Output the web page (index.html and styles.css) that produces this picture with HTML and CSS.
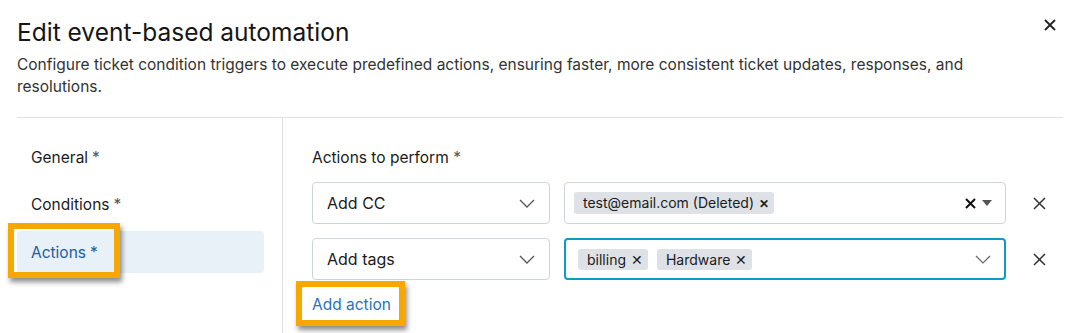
FILE: index.html
```html
<!DOCTYPE html>
<html lang="en">
<head>
    <meta charset="UTF-8">
    <title>Edit event-based automation</title>
    <link rel="stylesheet" href="styles.css">
</head>
<body>
    <div class="modal">
        <div class="modal-header">
            <h1>Edit event-based automation</h1>
            <p>Configure ticket condition triggers to execute predefined actions, ensuring faster, more consistent ticket updates, responses, and resolutions.</p>
            <button class="close-btn" aria-label="Close">
                <svg width="12" height="12" viewBox="0 0 12 12"><path d="M1 1L11 11M11 1L1 11" stroke="#222" stroke-width="1.8"/></svg>
            </button>
        </div>

        <div class="modal-body">
            <nav class="side-nav">
                <div class="nav-item">General <span class="req">*</span></div>
                <div class="nav-item">Conditions <span class="req">*</span></div>
                <div class="nav-item active">
                    Actions <span class="req">*</span>
                    <div class="callout callout-nav"></div>
                </div>
            </nav>

            <div class="panel">
                <div class="field-label">Actions to perform <span class="req">*</span></div>

                <div class="action-row">
                    <div class="select">
                        <span>Add CC</span>
                        <svg class="chevron" width="16" height="9" viewBox="0 0 16 9"><path d="M1 1L8 8L15 1" fill="none" stroke="#555" stroke-width="1.3"/></svg>
                    </div>
                    <div class="multi">
                        <div class="chips">
                            <span class="chip">test@email.com (Deleted) <b>&#x2715;</b></span>
                        </div>
                        <div class="multi-icons">
                            <svg width="11" height="11" viewBox="0 0 11 11"><path d="M1 1L10 10M10 1L1 10" stroke="#111" stroke-width="2"/></svg>
                            <svg width="10" height="6" viewBox="0 0 10 6"><path d="M0 0H10L5 6Z" fill="#555"/></svg>
                        </div>
                    </div>
                    <button class="remove-btn" aria-label="Remove">
                        <svg width="13" height="13" viewBox="0 0 13 13"><path d="M1 1L12 12M12 1L1 12" stroke="#333" stroke-width="1.5"/></svg>
                    </button>
                </div>

                <div class="action-row">
                    <div class="select">
                        <span>Add tags</span>
                        <svg class="chevron" width="16" height="9" viewBox="0 0 16 9"><path d="M1 1L8 8L15 1" fill="none" stroke="#555" stroke-width="1.3"/></svg>
                    </div>
                    <div class="multi focused">
                        <div class="chips">
                            <span class="chip light">billing <b>&#x2715;</b></span>
                            <span class="chip light">Hardware <b>&#x2715;</b></span>
                        </div>
                        <div class="multi-icons">
                            <svg class="chevron" width="16" height="9" viewBox="0 0 16 9"><path d="M1 1L8 8L15 1" fill="none" stroke="#666" stroke-width="1.2"/></svg>
                        </div>
                    </div>
                    <button class="remove-btn" aria-label="Remove">
                        <svg width="13" height="13" viewBox="0 0 13 13"><path d="M1 1L12 12M12 1L1 12" stroke="#333" stroke-width="1.5"/></svg>
                    </button>
                </div>

                <div class="add-wrap">
                    <a class="add-link" href="#">Add action</a>
                    <div class="callout callout-add"></div>
                </div>
            </div>
        </div>
    </div>
</body>
</html>
```

FILE: styles.css
```css
body {
    margin: 0;
    background: #fff;
    font-family: Inter, "Noto Sans", sans-serif;
    color: #1b1b1b;
}
.modal {
    padding: 16px 15px 0 17px;
    height: 333px;
    box-sizing: border-box;
    overflow: hidden;
}
.modal-header {
    position: relative;
    border-bottom: 1px solid #dde1e5;
    padding-bottom: 19px;
}
.modal-header h1 {
    margin: 0;
    font-size: 24.5px;
    font-weight: 400;
    line-height: 32px;
    color: #161616;
}
.modal-header p {
    margin: 6px 0 0;
    font-size: 15.5px;
    line-height: 22px;
    color: #333;
    padding-right: 80px;
}
.close-btn {
    position: absolute;
    right: 5px;
    top: 1px;
    border: 0;
    background: none;
    padding: 2px;
}
.modal-body {
    display: grid;
    grid-template-columns: 266px 1fr;
}
.side-nav {
    border-right: 1px solid #dde1e5;
    padding: 18px 18px 60px 0;
    display: flex;
    flex-direction: column;
    gap: 5.5px;
}
.nav-item {
    position: relative;
    height: 42px;
    display: flex;
    align-items: center;
    gap: 4px;
    padding-left: 14px;
    font-size: 15.5px;
    color: #1b1b1b;
    border-radius: 4px;
}
.nav-item.active {
    background: #e8f0f8;
    color: #1d5c9e;
}
.req {
    color: #555;
}
.nav-item.active .req {
    color: #1d5c9e;
}
.panel {
    padding: 29px 0 0 29px;
}
.field-label {
    font-size: 15.5px;
    line-height: 22px;
    color: #1b1b1b;
    margin-bottom: 13px;
}
.action-row {
    display: flex;
    align-items: center;
    margin-bottom: 14px;
}
.select {
    width: 238px;
    height: 42px;
    box-sizing: border-box;
    border: 1px solid #cfd4da;
    border-radius: 4px;
    display: flex;
    align-items: center;
    justify-content: space-between;
    padding: 0 14px;
    font-size: 16px;
    color: #1b1b1b;
}
.multi {
    margin-left: 14px;
    width: 442px;
    height: 42px;
    box-sizing: border-box;
    border: 1px solid #cfd4da;
    border-radius: 4px;
    display: flex;
    align-items: center;
    justify-content: space-between;
    padding: 0 13px 0 9px;
}
.multi.focused {
    border: 2px solid #0b9bc4;
    padding-left: 12px;
}
.chips {
    display: flex;
    gap: 9px;
}
.chip {
    background: #dee2e7;
    border-radius: 3px;
    font-size: 14px;
    line-height: 21px;
    padding: 0 5px 0 9px;
    color: #1b1b1b;
}
.chip b {
    font-size: 12px;
    margin-left: 1px;
}
.chip.light b {
    font-weight: 400;
    font-size: 14px;
}
.multi-icons {
    display: flex;
    align-items: center;
    gap: 6px;
}
.remove-btn {
    margin-left: 27px;
    border: 0;
    background: none;
    padding: 0;
    display: flex;
}
.add-wrap {
    position: relative;
    display: inline-block;
    margin-top: -2px;
}
.add-link {
    font-size: 15.5px;
    line-height: 22px;
    color: #2d6fbd;
    text-decoration: none;
}
.callout {
    position: absolute;
    border: 6px solid #f7a800;
    box-shadow: 2px 4px 5px rgba(0, 0, 0, 0.45);
    pointer-events: none;
}
.callout-nav {
    left: -9px;
    top: -8px;
    width: 100px;
    height: 43px;
}
.callout-add {
    left: -16px;
    top: -13px;
    width: 97px;
    height: 33px;
}
```
